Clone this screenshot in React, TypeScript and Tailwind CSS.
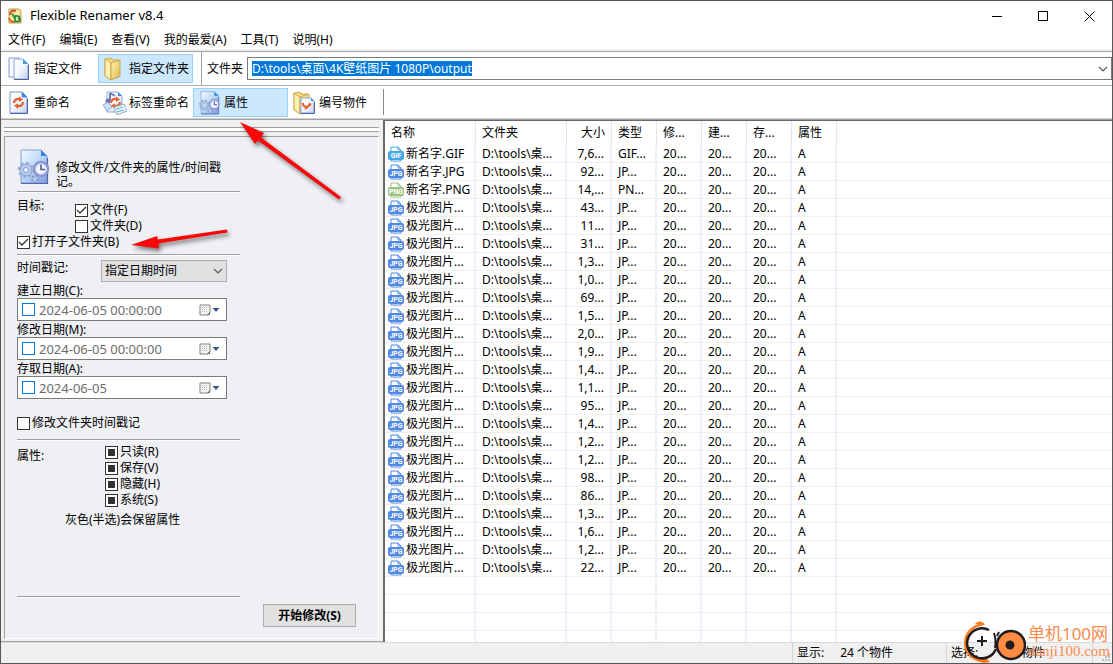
import React, { useEffect, useRef } from 'react';

const menus = ['文件(F)', '编辑(E)', '查看(V)', '我的最爱(A)', '工具(T)', '说明(H)'];

const named = [
  { name: '新名字.GIF', kind: 'GIF', size: '7,6...', type: 'GIF...' },
  { name: '新名字.JPG', kind: 'JPG', size: '92...', type: 'JP...' },
  { name: '新名字.PNG', kind: 'PNG', size: '14,...', type: 'PN...' }
];

const jpgSizes = [
  '43...', '11...', '31...', '1,3...', '1,0...', '69...', '1,5...', '2,0...', '1,9...', '1,4...', '1,1...',
  '95...', '1,4...', '1,2...', '1,2...', '98...', '86...', '1,3...', '1,6...', '1,2...', '22...'
];

const files = [
  ...named,
  ...jpgSizes.map((size) => ({ name: '极光图片...', kind: 'JPG', size, type: 'JP...' }))
];

const kindColors: Record<string, string> = { GIF: '#46a6ea', JPG: '#5089e4', PNG: '#9cc083' };

const Gradients = () => (
  <svg className="absolute size-0" aria-hidden="true">
    <defs>
      <linearGradient id="page" x1="0" y1="0" x2="1" y2="1">
        <stop offset="0" stopColor="#ffffff" />
        <stop offset="0.5" stopColor="#f1f5fe" />
        <stop offset="1" stopColor="#c3d2f2" />
      </linearGradient>
      <linearGradient id="bluePage" x1="0" y1="0" x2="1" y2="1">
        <stop offset="0" stopColor="#f4faff" />
        <stop offset="0.5" stopColor="#bcd8f8" />
        <stop offset="1" stopColor="#7c9be0" />
      </linearGradient>
      <linearGradient id="folder" x1="0" y1="0" x2="1" y2="1">
        <stop offset="0" stopColor="#fff3b4" />
        <stop offset="1" stopColor="#e3b84a" />
      </linearGradient>
    </defs>
  </svg>
);

const Sheet = ({ fill = 'url(#page)' }: { fill?: string }) => (
  <g>
    <path d="M1 1h12l5 5v16H1z" fill={fill} stroke="#7d97cf" />
    <path d="M13 1l5 5h-5z" fill="#3f8fe6" stroke="#3a78cc" strokeWidth="0.6" />
    <path d="M1 22.5h17.5V8" fill="none" stroke="#4d62a8" />
  </g>
);

const Swirl = () => (
  <g fill="none" stroke="#e8602c" strokeWidth="2.2">
    <path d="M5 12c0-3 3-5 6-3.500" />
    <path d="M14 11c0 3-3 5-6 3.500" />
    <path d="M10 5.500l4 3-4 2.500z" fill="#e8602c" stroke="none" />
    <path d="M9 18l-4-3.500 4-2z" fill="#e8602c" stroke="none" />
  </g>
);

const GearClock = () => (
  <g>
    <circle cx="9" cy="21" r="6" fill="#b9cdec" stroke="#7f9acb" strokeWidth="1" />
    <circle cx="9" cy="21" r="7" fill="none" stroke="#94add9" strokeWidth="2.500" strokeDasharray="2.800 2.700" />
    <circle cx="9" cy="21" r="2.500" fill="#eef4fd" stroke="#7f9acb" />
    <circle cx="18" cy="30" r="3" fill="#b9cdec" stroke="#8098cc" strokeWidth="2" strokeDasharray="2 1.500" />
    <circle cx="24" cy="20" r="7" fill="#f3f6ff" stroke="#8b94cf" strokeWidth="2.400" />
    <circle cx="24" cy="20" r="5.300" fill="none" stroke="#c6cdee" />
    <path d="M24 15.500V20.500H28" fill="none" stroke="#4c5ba8" strokeWidth="1.600" />
  </g>
);

const AttributeIcon = ({ className }: { className: string }) => (
  <svg className={className} viewBox="0 0 32 36" aria-hidden="true">
    <path d="M4 1h20l6 6v27H4z" fill="url(#bluePage)" stroke="#7f9bd8" />
    <path d="M24 1l6 6h-6z" fill="#2f86e2" />
    <path d="M4 34.500h26.500V9" fill="none" stroke="#5269ac" strokeWidth="1.200" />
    <GearClock />
  </svg>
);

const FilesIcon = () => (
  <svg className="h-6 w-[22px]" viewBox="0 0 22 24" aria-hidden="true">
    <path d="M1 1h10l3 3v16H1z" fill="#fbfcff" stroke="#7d97cf" />
    <path d="M6 2h9l5 5v15H6z" fill="url(#page)" stroke="#8ea6da" />
    <path d="M15 2l5 5h-5z" fill="#3f9fea" />
    <path d="M6 22.500h14.500V8" fill="none" stroke="#4d62a8" />
  </svg>
);

const FolderShape = () => (
  <g stroke="#c29a3a" strokeWidth="0.800">
    <path d="M1 2l6-1 1 2 7 0v17l-8 2-6-3z" fill="#f8dc7e" />
    <path d="M1 2l6 4v17l-6-4z" fill="#fff0ae" />
    <path d="M7 6l9-3v16l-9 4z" fill="url(#folder)" />
  </g>
);

const FolderIcon = () => (
  <svg className="h-6 w-[22px]" viewBox="-1 0 22 24" aria-hidden="true">
    <FolderShape />
  </svg>
);

const RenameIcon = () => (
  <svg className="h-6 w-[22px]" viewBox="-1 0 22 24" aria-hidden="true">
    <Sheet />
    <Swirl />
  </svg>
);

const TagIcon = () => (
  <svg className="h-6 w-6" viewBox="0 0 24 24" aria-hidden="true">
    <path d="M4 1h11l4 4v16H4z" fill="url(#page)" stroke="#8ea6da" />
    <path d="M15 1l4 4h-4z" fill="#3f8fe6" />
    <path d="M7 2v7M7 2l5 3" fill="none" stroke="#6a7ab8" strokeWidth="2" />
    <circle cx="5" cy="10" r="2.500" fill="#6a7ab8" />
    <path d="M0 14l5-3 4 5-5 4z" fill="#d2dff5" stroke="#8199cc" strokeWidth="0.800" />
    <g transform="translate(3 0)"><Swirl /></g>
    <path d="M11 16l10-3 3 7-10 4z" fill="#eaf3fb" stroke="#7f97b8" strokeWidth="0.800" />
    <path d="M13 18l7-2M14 21l7-2" stroke="#63b4d6" />
  </svg>
);

const NumberIcon = () => (
  <svg className="h-6 w-6" viewBox="0 0 24 24" aria-hidden="true">
    <FolderShape />
    <path d="M8 7h10l3 3v12H8z" fill="url(#page)" stroke="#8ea6da" />
    <path d="M18 7l3 3h-3z" fill="#3f8fe6" />
    <path d="M10 12c0 5 6 5 7 0M12 18l6-5" fill="none" stroke="#e8602c" strokeWidth="2" />
    <path d="M8 22.500h13.500V11" fill="none" stroke="#4d62a8" />
  </svg>
);

const AppIcon = () => (
  <svg className="h-4 w-[15px]" viewBox="0 0 15 16" aria-hidden="true">
    <path d="M1 1h10l2 2v12H1z" fill="#f5e9a0" stroke="#b99a3c" />
    <path d="M2 7c0-4 3-5 6-4" fill="none" stroke="#d9502c" strokeWidth="2.200" />
    <path d="M3 6l2-1 3 5-2 1z" fill="#4da345" />
    <path d="M7 8h3c2 0 2 2 0 2.500 3 0 3 3 0 3H7z" fill="#d6edc2" stroke="#23792b" strokeWidth="1.500" />
    <path d="M1 10c1 3 3 4 5 4" fill="none" stroke="#d9502c" strokeWidth="1.800" />
  </svg>
);

const FileIcon = ({ kind }: { kind: string }) => (
  <svg className="h-4 w-4 shrink-0" viewBox="0 0 16 16" aria-hidden="true">
    <path d="M3 5V1h7l3 3v2M3 12v3h10v-3M10 1v3h3" fill="#ffffff" stroke={kindColors[kind]} />
    <rect x="0" y="5" width="16" height="9" rx="2" fill={kindColors[kind]} />
    <text x="8" y="12" textAnchor="middle" fontSize="7" fontWeight="700" fill="#ffffff" fontFamily="Roboto, sans-serif">
      {kind}
    </text>
  </svg>
);

const Chevron = () => (
  <svg className="pointer-events-none h-2 w-[10px]" viewBox="0 0 10 8" aria-hidden="true">
    <path d="M1 2l4 4 4-4" fill="none" stroke="#555555" strokeWidth="1.200" />
  </svg>
);

const Rule = ({ className }: { className: string }) => (
  <hr className={`h-[2px] w-[223px] shrink-0 border-t border-b border-t-[#a0a0a0] border-b-white ${className}`} />
);

type CheckProps = { label: string; checked?: boolean; mixed?: boolean };

const Check = ({ label, checked = false, mixed = false }: CheckProps) => {
  const box = useRef<HTMLInputElement>(null);

  useEffect(() => {
    if (box.current) box.current.indeterminate = mixed;
  }, [mixed]);

  return (
    <label className="flex h-4 items-center gap-[2px] whitespace-nowrap">
      <span className="grid place-items-center">
        <input
          ref={box}
          type="checkbox"
          defaultChecked={checked}
          className="peer col-start-1 row-start-1 grid size-[13px] appearance-none place-content-center border border-[#333333] bg-white before:size-[7px] before:bg-[#333333] before:opacity-0 indeterminate:before:opacity-100"
        />
        <svg className="pointer-events-none col-start-1 row-start-1 size-[11px] opacity-0 peer-checked:opacity-100" viewBox="0 0 11 11" aria-hidden="true">
          <path d="M1 5l3 3 6-6" fill="none" stroke="#333333" strokeWidth="1.300" />
        </svg>
      </span>
      <span>{label}</span>
    </label>
  );
};

const DateField = ({ id, label, value }: { id: string; label: string; value: string }) => (
  <div className="w-[210px]">
    <label htmlFor={id} className="block h-4 leading-[18px]">{label}</label>
    <div className="flex h-[23px] items-center border border-[#7a7a7a] bg-white pl-1">
      <input type="checkbox" aria-label={label} className="size-[13px] shrink-0 appearance-none border border-[#0078d7] bg-white" />
      <input id={id} type="text" defaultValue={value} className="ml-1 min-w-0 flex-1 bg-transparent text-[13px] leading-4 text-[#6d6d6d] outline-none" />
      <button type="button" aria-label="日历" className="mr-[5px]">
        <svg className="h-3 w-[22px]" viewBox="0 0 22 12" aria-hidden="true">
          <path d="M1 1h10v8l-2 2H1z" fill="#f4f4f4" stroke="#85807e" />
          <path d="M3 3.500h6M3 5.500h6M3 7.500h6" stroke="#aab2c0" strokeDasharray="1 1" />
          <path d="M8 11l3-3v3z" fill="#6a6361" />
          <path d="M13.500 4h7L17 8z" fill="#3d5591" />
        </svg>
      </button>
    </div>
  </div>
);

const TitleBar = () => (
  <header className="flex h-[30px] shrink-0 items-center bg-white pl-[7px]">
    <AppIcon />
    <h1 className="ml-[7px] text-[13px]">Flexible Renamer v8.4</h1>
    <div className="ml-auto flex h-full">
      <button type="button" aria-label="最小化" className="grid w-[46px] place-items-center">
        <svg className="size-[11px]" viewBox="0 0 11 11"><path d="M0 5.500h10" stroke="#000000" /></svg>
      </button>
      <button type="button" aria-label="最大化" className="grid w-[46px] place-items-center">
        <svg className="size-[11px]" viewBox="0 0 11 11"><path d="M.5.5h9v9h-9z" fill="none" stroke="#000000" /></svg>
      </button>
      <button type="button" aria-label="关闭" className="grid w-[46px] place-items-center">
        <svg className="size-[11px]" viewBox="0 0 11 11"><path d="M.5.5l10 10M10.500.5l-10 10" stroke="#000000" /></svg>
      </button>
    </div>
  </header>
);

const toolButton = 'flex w-[95px] shrink-0 items-center whitespace-nowrap border pl-1 pt-px';
const toolIdle = 'border-transparent';
const toolActive = 'border-[#99d1ff] bg-[#cce8ff]';

const AddressBar = () => {
  const path = useRef<HTMLInputElement>(null);

  useEffect(() => {
    path.current?.focus();
    path.current?.select();
  }, []);

  return (
    <div className="flex h-[33px] shrink-0 items-center bg-white pl-[2px]">
      <button type="button" className={`${toolButton} ${toolIdle} h-[29px] gap-1`}><FilesIcon />指定文件</button>
      <button type="button" className={`${toolButton} ${toolActive} h-[29px] gap-1`}><FolderIcon />指定文件夹</button>
      <span className="ml-2 h-full w-px bg-[#a0a0a0]" />
      <label htmlFor="path" className="ml-[5px] mr-1 shrink-0">文件夹</label>
      <div className="flex h-[23px] min-w-0 flex-1 items-center border border-[#7a7a7a] pl-1 pr-[3px]">
        <input
          ref={path}
          id="path"
          type="text"
          defaultValue="D:\tools\桌面\4K壁纸图片 1080P\output"
          className="min-w-0 flex-1 text-[12px] leading-[15px] outline-none selection:bg-[#0078d7] selection:text-white"
        />
        <button type="button" aria-label="展开"><Chevron /></button>
      </div>
    </div>
  );
};

const ModeBar = () => (
  <nav className="flex h-[32px] shrink-0 items-center bg-white pl-[2px]">
    <button type="button" className={`${toolButton} ${toolIdle} h-[29px] gap-1`}><RenameIcon />重命名</button>
    <button type="button" className={`${toolButton} ${toolIdle} h-[29px] gap-[2px]`}><TagIcon />标签重命名</button>
    <button type="button" className={`${toolButton} ${toolActive} h-[29px] gap-1`}><AttributeIcon className="h-6 w-[22px]" />属性</button>
    <button type="button" className={`${toolButton} ${toolIdle} h-[29px] gap-[2px]`}><NumberIcon />编号物件</button>
    <span className="h-[26px] w-px bg-[#8a8a8a]" />
  </nav>
);

const AttributePanel = () => (
  <aside className="flex w-[382px] shrink-0 flex-col border-b border-[#a0a0a0] bg-[#f0f0f0] pb-[2px] pl-[3px] pr-1">
    <div className="mt-[7px] h-[5px] shrink-0 border-y border-[#a0a0a0] bg-white" />
    <form className="mt-1 flex min-h-0 flex-1 flex-col border border-t-[#a0a0a0] border-r-white border-b-white border-l-[#a0a0a0] bg-[#eff0f4] pb-[11px] pl-3">
      <div className="mt-3 flex h-10 shrink-0 items-end gap-[7px]">
        <AttributeIcon className="mb-1 h-9 w-8 shrink-0" />
        <p className="w-[172px] leading-[14px]">修改文件/文件夹的属性/时间戳记。</p>
      </div>
      <Rule className="mt-[2px]" />

      <div className="mt-[5px] flex">
        <span className="w-[58px] leading-4">目标:</span>
        <div className="pt-1">
          <Check label="文件(F)" checked />
          <Check label="文件夹(D)" />
        </div>
      </div>
      <Check label="打开子文件夹(B)" checked />
      <Rule className="mt-1" />

      <div className="mt-1 flex">
        <label htmlFor="stamp" className="w-[84px] leading-4">时间戳记:</label>
        <div className="grid items-center">
          <select id="stamp" className="col-start-1 row-start-1 h-[22px] w-[126px] appearance-none border border-[#adadad] bg-[#e1e1e1] pl-[3px]">
            <option>指定日期时间</option>
          </select>
          <span className="pointer-events-none col-start-1 row-start-1 mr-1 justify-self-end"><Chevron /></span>
        </div>
      </div>
      <DateField id="created" label="建立日期(C):" value="2024-06-05 00:00:00" />
      <DateField id="modified" label="修改日期(M):" value="2024-06-05 00:00:00" />
      <DateField id="accessed" label="存取日期(A):" value="2024-06-05" />
      <div className="mt-4">
        <Check label="修改文件夹时间戳记" />
      </div>
      <Rule className="mt-2" />

      <div className="mt-[3px] flex">
        <span className="w-[88px] pt-1 leading-4">属性:</span>
        <div>
          <Check label="只读(R)" mixed />
          <Check label="保存(V)" mixed />
          <Check label="隐藏(H)" mixed />
          <Check label="系统(S)" mixed />
        </div>
      </div>
      <p className="mt-1 pl-12 leading-4">灰色(半选)会保留属性</p>

      <Rule className="mt-auto" />
      <button type="button" className="mt-[6px] mr-[22px] ml-auto h-[23px] w-[93px] shrink-0 border border-[#adadad] bg-[#e1e1e1] font-['Noto_Sans','Noto_Sans_CJK_SC',sans-serif] font-bold">
        开始修改(S)
      </button>
    </form>
  </aside>
);

const headCell = 'border-r border-[#e5e5e5] pl-[6px] text-left font-normal';
const bodyCell = 'border-r-2 border-b border-r-[#ecf1f9] border-b-[#f0f0f0] pl-[6px]';

const FileList = () => (
  <div className="min-w-0 flex-1 overflow-hidden border-t border-l-2 border-[#696969] bg-white">
    <table className="w-full table-fixed border-separate border-spacing-0 whitespace-nowrap">
      <colgroup>
        <col className="w-[91px]" />
        <col className="w-[91px]" />
        <col className="w-[45px]" />
        <col className="w-[45px]" />
        <col className="w-[45px]" />
        <col className="w-[45px]" />
        <col className="w-[45px]" />
        <col className="w-[45px]" />
        <col />
      </colgroup>
      <thead>
        <tr className="h-6">
          <th className={headCell}>名称</th>
          <th className={headCell}>文件夹</th>
          <th className="border-r border-[#e5e5e5] pr-[6px] text-right font-normal">大小</th>
          <th className={headCell}>类型</th>
          <th className={headCell}>修...</th>
          <th className={headCell}>建...</th>
          <th className={headCell}>存...</th>
          <th className={headCell}>属性</th>
          <th />
        </tr>
      </thead>
      <tbody>
        {files.map((file, index) => (
          <tr key={index} className="h-[18px] leading-4">
            <td className="border-r-2 border-b border-r-[#ecf1f9] border-b-[#f0f0f0] pl-[3px]">
              <span className="flex items-center gap-[2px]"><FileIcon kind={file.kind} />{file.name}</span>
            </td>
            <td className={bodyCell}>D:\tools\桌...</td>
            <td className="border-r-2 border-b border-r-[#ecf1f9] border-b-[#f0f0f0] pr-[6px] text-right">{file.size}</td>
            <td className={bodyCell}>{file.type}</td>
            <td className={bodyCell}>20...</td>
            <td className={bodyCell}>20...</td>
            <td className={bodyCell}>20...</td>
            <td className={bodyCell}>A</td>
            <td className="border-b border-[#f0f0f0]" />
          </tr>
        ))}
        {[0, 1, 2, 3].map((row) => (
          <tr key={row} className="h-[18px]">
            {[0, 1, 2, 3, 4, 5, 6, 7].map((cell) => <td key={cell} className={bodyCell} />)}
            <td className="border-b border-[#f0f0f0]" />
          </tr>
        ))}
      </tbody>
    </table>
  </div>
);

const StatusBar = () => (
  <footer className="flex h-[21px] shrink-0 items-center border-t border-[#d9d9d9] bg-[#f0f0f0]">
    <div className="ml-auto flex h-full w-[154px] items-center gap-4 border-l border-[#d5d5d5] pl-1">
      <span>显示:</span>
      <span>24 个物件</span>
    </div>
    <div className="flex h-full w-[146px] items-center border-l border-[#d5d5d5] pl-1">
      <span className="w-[58px]">选择:</span>
      <span className="w-3">0</span>
      <span>物件</span>
    </div>
    <div className="flex h-full w-5 items-end justify-end border-l border-[#d5d5d5] pr-[2px] pb-[2px]">
      <svg className="size-2" viewBox="0 0 8 8" aria-hidden="true">
        <path d="M6 0h2v2H6zM3 3h2v2H3zM6 3h2v2H6zM0 6h2v2H0zM3 6h2v2H3zM6 6h2v2H6z" fill="#bfbfbf" />
      </svg>
    </div>
  </footer>
);

const Arrows = () => (
  <svg className="pointer-events-none absolute top-[116px] left-[126px] h-[140px] w-[224px] drop-shadow-[2px_3px_2px_rgba(0,0,0,0.5)]" viewBox="126 116 224 140" aria-hidden="true">
    <path d="M239 121l24 11-3 4.500 80 59.500-2 2.500-81-59-3 3.500z" fill="#f80808" />
    <path d="M130 244l26-9 1 3.500 69-10 .5 3-69 11 .5 5z" fill="#f80808" />
  </svg>
);

const Watermark = () => (
  <div className="pointer-events-none absolute right-[2px] bottom-0 flex items-center gap-[2px]">
    <svg className="h-[42px] w-[62px]" viewBox="0 0 62 42" aria-hidden="true">
      <path d="M20 2C7 3 0 12 0 22c0 11 8 18 20 20l6-1-3-3C10 38 3 31 3 21 3 12 9 6 20 4z" fill="#ff7a1e" />
      <path d="M11 3c3-4 8-3 10 1z" fill="#ff7a1e" />
      <path d="M25 9A15 15 0 1 0 32 28" fill="none" stroke="#221c1c" strokeWidth="2.500" />
      <path d="M18 15v10M13 20h10" stroke="#221c1c" strokeWidth="2" />
      <circle cx="47" cy="24" r="14" fill="#ff8c42" stroke="#221c1c" strokeWidth="2.500" />
      <circle cx="46" cy="24" r="4.500" fill="#221c1c" />
      <path d="M30 12c2 6 2 10 1 15M33 15l2-4" fill="none" stroke="#221c1c" strokeWidth="2" />
    </svg>
    <div className="text-[#f98b4c]">
      <p className="text-[17px] leading-[19px]">单机100网</p>
      <p className="font-['Liberation_Serif',serif] text-[15px] leading-[17px]">danji100.com</p>
    </div>
  </div>
);

const App = () => (
  <div className="relative flex h-screen min-h-[640px] flex-col overflow-hidden border border-[#5a5658] bg-[#f0f0f0] font-['Noto_Sans','Noto_Sans_CJK_SC',sans-serif] text-[12px] text-black">
    <Gradients />
    <TitleBar />
    <nav className="flex h-[18px] shrink-0 items-center gap-[14px] bg-white pl-[7px]">
      {menus.map((menu) => <button key={menu} type="button" className="whitespace-nowrap">{menu}</button>)}
    </nav>
    <div className="h-[3px] shrink-0 border-b border-[#a0a0a0] bg-[#f0f0f0]" />
    <AddressBar />
    <div className="h-px shrink-0 bg-[#b0b0b4]" />
    <ModeBar />
    <div className="h-[2px] shrink-0 border-b border-[#a0a0a0] bg-[#d0d0d0]" />
    <main className="flex min-h-0 flex-1">
      <AttributePanel />
      <FileList />
    </main>
    <StatusBar />
    <Arrows />
    <Watermark />
  </div>
);

export default App;
